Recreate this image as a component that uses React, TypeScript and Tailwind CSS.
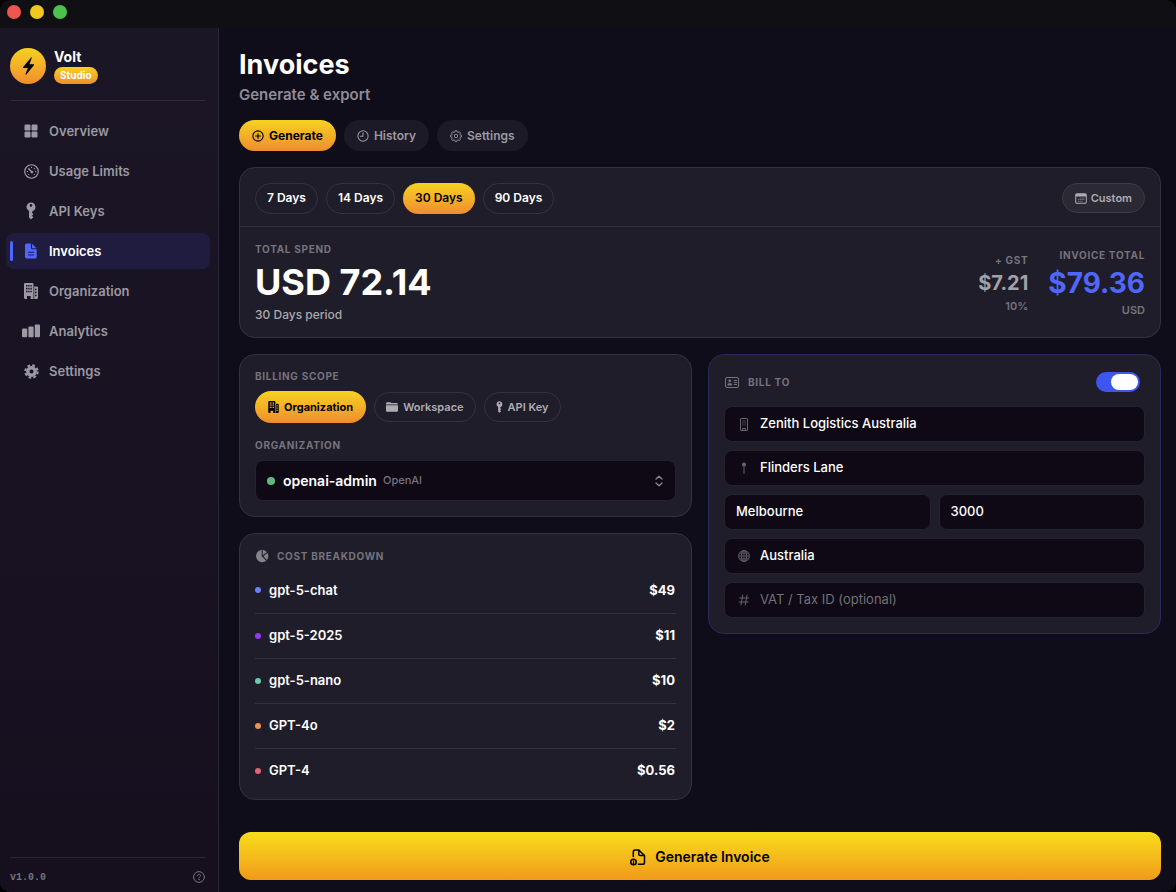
import React, { useState } from 'react'
import clsx from 'clsx'

type IconProps = {
    className?: string
}

const GridIcon = ({ className }: IconProps) => (
    <svg viewBox="0 0 14 14" className={className} fill="currentColor">
        <rect x="0.5" y="0.5" width="6" height="6" rx="1.2" />
        <rect x="7.5" y="0.5" width="6" height="6" rx="1.2" />
        <rect x="0.5" y="7.5" width="6" height="6" rx="1.2" />
        <rect x="7.5" y="7.5" width="6" height="6" rx="1.2" />
    </svg>
)

const GaugeIcon = ({ className }: IconProps) => (
    <svg viewBox="0 0 16 16" className={className} fill="none">
        <circle cx="8" cy="8" r="7.2" stroke="currentColor" strokeWidth="1.3" />
        <path
            d="M5 5 8.2 8.4"
            stroke="currentColor"
            strokeWidth="1.5"
            strokeLinecap="round"
        />
        <g fill="currentColor">
            <circle cx="8.4" cy="8.6" r="1.4" />
            <circle cx="8" cy="3.6" r="0.7" />
            <circle cx="11" cy="5" r="0.7" />
            <circle cx="12.4" cy="8" r="0.7" />
            <circle cx="3.6" cy="8" r="0.7" />
            <circle cx="5" cy="11" r="0.7" />
            <circle cx="11" cy="11" r="0.7" />
        </g>
    </svg>
)

const KeyIcon = ({ className }: IconProps) => (
    <svg viewBox="0 0 10 18" className={className} fill="currentColor">
        <path
            fillRule="evenodd"
            d="M5 .4a4.5 4.5 0 0 0-2 8.5v6.7l2 2 2.4-2.3-1.5-1.5 1.5-1.6-1.2-1.3V9.2A4.5 4.5 0 0 0 5 .4Zm0 1.7a1.3 1.3 0 1 1 0 2.6 1.3 1.3 0 0 1 0-2.6Z"
        />
    </svg>
)

const DocumentIcon = ({ className }: IconProps) => (
    <svg viewBox="0 0 12 16" className={className} fill="currentColor">
        <path
            fillRule="evenodd"
            d="M1.8.5h4.1v4.3c0 .9.5 1.4 1.4 1.4h4.4v7.6c0 1.1-.7 1.8-1.8 1.8H1.8C.7 15.6 0 14.9 0 13.8V2.3C0 1.2.7.5 1.8.5ZM3 8.8v1h6v-1H3Zm0 2.8v1h6v-1H3Z"
        />
        <path d="M7 .7 11.5 5.2H7.3A.3.3 0 0 1 7 4.900V.7Z" />
    </svg>
)

const BuildingIcon = ({ className }: IconProps) => (
    <svg viewBox="0 0 14 16" className={className} fill="currentColor">
        <path
            fillRule="evenodd"
            d="M1.2 0h7.1c.7 0 1.2.5 1.2 1.2V16H6.6v-3H3v3H1.2C.5 16 0 15.5 0 14.8V1.200C0 .5.5 0 1.2 0ZM2 2v1.500h1.500V2H2Zm2.200 0v1.500h1.400V2H4.200Zm2.200 0v1.500h1.400V2H6.400ZM2 4.800v1.600h1.500V4.800H2Zm2.200 0v1.600h1.400V4.800H4.200Zm2.200 0v1.600h1.400V4.800H6.400ZM2 7.700v1.600h1.500V7.700H2Zm2.200 0v1.600h1.400V7.700H4.200Zm2.200 0v1.600h1.400V7.700H6.400Z"
        />
        <path
            fillRule="evenodd"
            d="M10.200 3.500h2.600c.7 0 1.200.5 1.200 1.200v10.100c0 .7-.5 1.200-1.200 1.200h-2.600V3.500ZM11 5.800v1.400h1.600V5.800H11Zm0 3v1.400h1.600V8.800H11Zm0 3v1.400h1.600v-1.400H11Z"
        />
    </svg>
)

const BarsIcon = ({ className }: IconProps) => (
    <svg viewBox="0 0 18 14" className={className} fill="currentColor">
        <rect x="0" y="4.5" width="5.2" height="8.8" rx="1" />
        <rect x="6.4" y="2.5" width="5.2" height="10.8" rx="1" />
        <rect x="12.8" y="0.5" width="5.2" height="12.8" rx="1" />
    </svg>
)

const GearIcon = ({ className }: IconProps) => (
    <svg viewBox="0 0 16 16" className={className} fill="none" stroke="currentColor">
        <circle cx="8" cy="8" r="4" strokeWidth="3.6" />
        <circle cx="8" cy="8" r="6.6" strokeWidth="2.2" strokeDasharray="2.9 2.284" />
    </svg>
)

const GearOutlineIcon = ({ className }: IconProps) => (
    <svg
        viewBox="0 0 16 16"
        className={className}
        fill="none"
        stroke="currentColor"
        strokeWidth="1.2"
        strokeLinejoin="round"
    >
        <path d="M6.9.9h2.2l.5 1.8 1.1.5 1.7-.9 1.500 1.500-.9 1.700.5 1.100 1.800.5v2.100l-1.800.5-.5 1.100.9 1.700-1.500 1.500-1.700-.9-1.100.5-.5 1.700H6.900l-.5-1.700-1.100-.5-1.700.9-1.500-1.500.9-1.700-.5-1.100L.700 9.200V7.100l1.800-.5.500-1.100-.9-1.700 1.500-1.500 1.700.9 1.100-.5.500-1.800Z" />
        <circle cx="8" cy="8" r="2.300" />
    </svg>
)

const BoltIcon = ({ className }: IconProps) => (
    <svg viewBox="0 0 14 20" className={className} fill="currentColor">
        <path d="M9.700.7 1 11.200c-.4.5-.2 1 .4 1h4.800l-2.500 6.700c-.3.8.4 1.100.9.500L13 9.100c.4-.5.2-1-.4-1H8.100l2.500-6.900c.2-.8-.4-1.100-.9-.5Z" />
    </svg>
)

const PlusCircleIcon = ({ className }: IconProps) => (
    <svg
        viewBox="0 0 14 14"
        className={className}
        fill="none"
        stroke="currentColor"
        strokeWidth="1.3"
        strokeLinecap="round"
    >
        <circle cx="7" cy="7" r="6" />
        <path d="M7 4.200v5.600M4.200 7h5.600" />
    </svg>
)

const ClockIcon = ({ className }: IconProps) => (
    <svg
        viewBox="0 0 14 14"
        className={className}
        fill="none"
        stroke="currentColor"
        strokeWidth="1.2"
        strokeLinecap="round"
        strokeLinejoin="round"
    >
        <circle cx="7" cy="7" r="6" />
        <path d="M7 3.200v4H4" />
    </svg>
)

const CalendarIcon = ({ className }: IconProps) => (
    <svg viewBox="0 0 12 11" className={className} fill="currentColor">
        <path
            fillRule="evenodd"
            d="M2 .2h8c1.100 0 1.800.7 1.800 1.800v7c0 1.100-.7 1.800-1.800 1.800H2C.900 10.800.200 10.100.200 9V2C.200.900.900.200 2 .200ZM1.200 3.400V9c0 .5.300.8.800.8h8c.5 0 .8-.3.8-.8V3.400H1.200Z"
        />
        <path
            d="M4.700 4.400h1v1h-1zM6.500 4.400h1v1h-1zM8.300 4.400h1v1h-1zM2.900 6.100h1v1h-1zM4.700 6.100h1v1h-1zM6.500 6.100h1v1h-1zM8.300 6.100h1v1h-1zM2.900 7.800h1v1h-1zM4.700 7.800h1v1h-1zM6.500 7.800h1v1h-1z"
            opacity="0.7"
        />
    </svg>
)

const FolderIcon = ({ className }: IconProps) => (
    <svg viewBox="0 0 12 10" className={className} fill="currentColor">
        <path d="M0 2.600V1.700C0 .700.600.200 1.500.200h2.200c.5 0 .8.100 1.100.4l.5.4h5c1 0 1.600.5 1.600 1.500v.1H0Z" />
        <path d="M0 3.200h12v5.100c0 1-.6 1.500-1.600 1.500H1.500C.600 9.800 0 9.300 0 8.300V3.200Z" />
    </svg>
)

const PieIcon = ({ className }: IconProps) => (
    <svg viewBox="0 0 14 14" className={className} fill="currentColor">
        <path d="M6.700.8v6.400l4.600 4.500A6.200 6.200 0 1 1 6.700.8Z" />
        <path d="M7.700.8a6.200 6.200 0 0 1 4.100 2.400L7.700 6.200V.8Z" />
        <path d="M12.400 4.100a6.200 6.200 0 0 1-.4 6.900L8.300 7.200l4.100-3.100Z" />
    </svg>
)

const IdCardIcon = ({ className }: IconProps) => (
    <svg viewBox="0 0 14 11" className={className} fill="none" stroke="currentColor">
        <rect x="0.5" y="0.5" width="13" height="10" rx="1.5" />
        <circle cx="4.700" cy="3.900" r="1.300" fill="currentColor" stroke="none" />
        <path
            d="M2.300 8.400c0-1.700 1-2.500 2.400-2.500s2.400.8 2.400 2.500Z"
            fill="currentColor"
            stroke="none"
        />
        <path d="M8.800 3.500H12M8.800 5.500H12M8.800 7.500H12" />
    </svg>
)

const TowerIcon = ({ className }: IconProps) => (
    <svg viewBox="0 0 8 13" className={className} fill="none" stroke="currentColor">
        <rect x="0.5" y="0.5" width="7" height="12" rx="0.6" />
        <path d="M2.900 2.500v6M5.100 2.500v6" strokeDasharray="1 1" strokeWidth="1.200" />
        <path d="M2.500 12.500v-2h3v2" />
    </svg>
)

const PinIcon = ({ className }: IconProps) => (
    <svg viewBox="0 0 6 12" className={className}>
        <circle cx="3" cy="2.400" r="2" fill="currentColor" />
        <path d="M3 4v7.500" stroke="currentColor" strokeLinecap="round" />
    </svg>
)

const GlobeIcon = ({ className }: IconProps) => (
    <svg viewBox="0 0 12 12" className={className} fill="none" stroke="currentColor">
        <circle cx="6" cy="6" r="5.400" />
        <ellipse cx="6" cy="6" rx="2.600" ry="5.400" />
        <path d="M6 .6v10.800M.6 6h10.800M1.500 3.200h9M1.500 8.800h9" strokeWidth="0.800" />
    </svg>
)

const HashIcon = ({ className }: IconProps) => (
    <svg
        viewBox="0 0 12 12"
        className={className}
        fill="none"
        stroke="currentColor"
        strokeLinecap="round"
    >
        <path d="M4.700 1 3 11M9 1 7.300 11M1.700 4h9M1.200 8h9" />
    </svg>
)

const UpDownIcon = ({ className }: IconProps) => (
    <svg
        viewBox="0 0 8 12"
        className={className}
        fill="none"
        stroke="currentColor"
        strokeWidth="1.300"
        strokeLinecap="round"
        strokeLinejoin="round"
    >
        <path d="M1 4 4 1.200 7 4M1 8l3 2.800L7 8" />
    </svg>
)

const HelpIcon = ({ className }: IconProps) => (
    <svg
        viewBox="0 0 12 12"
        className={className}
        fill="none"
        stroke="currentColor"
        strokeLinecap="round"
    >
        <circle cx="6" cy="6" r="5.400" />
        <path d="M4.500 4.700C4.600 3.700 5.200 3.300 6 3.300s1.500.5 1.500 1.300c0 1.200-1.500 1.100-1.500 2.300" />
        <circle cx="6" cy="8.600" r="0.300" fill="currentColor" strokeWidth="0.600" />
    </svg>
)

const ExportIcon = ({ className }: IconProps) => (
    <svg
        viewBox="0 0 16 17"
        className={className}
        fill="none"
        stroke="currentColor"
        strokeWidth="1.500"
        strokeLinejoin="round"
        strokeLinecap="round"
    >
        <path d="M3.300 7.500V2.800c0-1.200.6-1.800 1.800-1.800h3.700l5.700 5.600v6.900c0 1.200-.6 1.800-1.800 1.800H8.300" />
        <path d="M8.800 1.200v4c0 .9.400 1.300 1.300 1.300h4" />
        <circle cx="3.500" cy="13" r="2.700" strokeWidth="1.600" />
        <path d="M3.500 14.500v-2.700" strokeWidth="1.200" />
    </svg>
)

const navItems = [
    { label: 'Overview', icon: <GridIcon className="size-[14px]" /> },
    { label: 'Usage Limits', icon: <GaugeIcon className="size-[15px]" /> },
    { label: 'API Keys', icon: <KeyIcon className="w-[10px] h-[18px]" /> },
    { label: 'Invoices', icon: <DocumentIcon className="w-3 h-4" /> },
    { label: 'Organization', icon: <BuildingIcon className="w-[14px] h-4" /> },
    { label: 'Analytics', icon: <BarsIcon className="w-[18px] h-[14px]" /> },
    { label: 'Settings', icon: <GearIcon className="size-[15px]" /> },
]

const tabs = [
    { label: 'Generate', icon: <PlusCircleIcon className="size-3" /> },
    { label: 'History', icon: <ClockIcon className="size-3" /> },
    { label: 'Settings', icon: <GearOutlineIcon className="size-3" /> },
]

const periods = ['7 Days', '14 Days', '30 Days', '90 Days']

const scopes = [
    { label: 'Organization', icon: <BuildingIcon className="w-[11px] h-3" /> },
    { label: 'Workspace', icon: <FolderIcon className="w-3 h-[10px]" /> },
    { label: 'API Key', icon: <KeyIcon className="w-[7px] h-3" /> },
]

const costs = [
    { model: 'gpt-5-chat', amount: '$49', dot: 'bg-[#6b7fff]' },
    { model: 'gpt-5-2025', amount: '$11', dot: 'bg-[#9a35f0]' },
    { model: 'gpt-5-nano', amount: '$10', dot: 'bg-[#62cdb0]' },
    { model: 'GPT-4o', amount: '$2', dot: 'bg-[#f0924c]' },
    { model: 'GPT-4', amount: '$0.56', dot: 'bg-[#e0647c]' },
]

const gold = 'bg-linear-to-b from-[#f5d21f] to-[#f08c2d]'

type SectionLabelProps = {
    children: React.ReactNode
    className?: string
}

const SectionLabel = ({ children, className }: SectionLabelProps) => (
    <div
        className={clsx(
            'text-[10px] leading-4 font-bold tracking-[0.07em] uppercase text-[#75737c]',
            className
        )}
    >
        {children}
    </div>
)

type CardProps = {
    children: React.ReactNode
    className?: string
}

const Card = ({ children, className }: CardProps) => (
    <section className={clsx('rounded-2xl border bg-[#1f1d29]', className)}>
        {children}
    </section>
)

type FieldProps = {
    label: string
    value?: string
    placeholder?: string
    icon?: React.ReactNode
}

const Field = ({ label, value, placeholder, icon }: FieldProps) => (
    <label className="flex h-9 w-full min-w-0 items-center gap-2 rounded-lg border border-[#24222e] bg-[#0e0915] px-[11px]">
        {icon && (
            <span className="flex w-4 shrink-0 justify-center text-[#65636c]">
                {icon}
            </span>
        )}
        <input
            aria-label={label}
            defaultValue={value}
            placeholder={placeholder}
            className="w-full min-w-0 bg-transparent text-[13px] font-medium text-white outline-none placeholder:font-normal placeholder:text-[#727078]"
        />
    </label>
)

const Sidebar = () => (
    <aside className="flex w-[219px] shrink-0 flex-col border-r border-[#2a2735] bg-linear-to-b from-[#1b1626] to-[#150f1e]">
        <div className="ml-[10px] mr-3 flex items-center gap-2 border-b border-[#2d2937] pt-5 pb-4">
            <div
                className={clsx(
                    'flex size-9 items-center justify-center rounded-full text-black',
                    gold
                )}
            >
                <BoltIcon className="h-[18px] w-[13px]" />
            </div>
            <div className="flex flex-col items-start gap-0.5">
                <span className="text-sm leading-[17px] font-bold text-white">Volt</span>
                <span
                    className={clsx(
                        'rounded-full px-1.5 text-[10px] leading-[17px] font-bold text-white',
                        gold
                    )}
                >
                    Studio
                </span>
            </div>
        </div>

        <nav className="ml-1.5 mr-2 mt-3 flex flex-col gap-1">
            {navItems.map((item) => {
                const active = item.label === 'Invoices'
                return (
                    <a
                        key={item.label}
                        href="#"
                        className={clsx(
                            'flex h-9 items-center rounded-lg pl-1 text-[13px] font-semibold',
                            active ? 'bg-[#201c3f] text-white' : 'text-[#9b99a1]'
                        )}
                    >
                        <span
                            className={clsx(
                                'h-5 w-[3px] rounded-full',
                                active && 'bg-[#5166fb]'
                            )}
                        />
                        <span
                            className={clsx(
                                'mx-2 flex w-5 justify-center',
                                active && 'text-[#5166fb]'
                            )}
                        >
                            {item.icon}
                        </span>
                        <span className="pt-0.5">{item.label}</span>
                    </a>
                )
            })}
        </nav>

        <div className="mt-auto ml-[10px] mr-3 flex h-[35px] items-center justify-between border-t border-[#2a2634] pt-1 text-[#75737c]">
            <span className="font-['Liberation_Mono',monospace] text-[10px] font-bold">
                v1.0.0
            </span>
            <button aria-label="Help" className="mr-px">
                <HelpIcon className="size-3" />
            </button>
        </div>
    </aside>
)

const SpendCard = () => {
    const [period, setPeriod] = useState('30 Days')

    return (
        <Card className="mt-4 border-[#34323d]">
            <div className="flex h-[59px] items-center justify-between border-b border-[#34323d] px-[15px] pt-0.5">
                <div className="flex gap-2">
                    {periods.map((item) => (
                        <button
                            key={item}
                            onClick={() => setPeriod(item)}
                            className={clsx(
                                'h-[31px] rounded-full text-xs font-semibold',
                                item === period
                                    ? ['px-3 text-black', gold]
                                    : 'border border-[#34323d] px-[11px] text-white'
                            )}
                        >
                            {item}
                        </button>
                    ))}
                </div>
                <button className="flex h-[30px] items-center gap-1 rounded-full border border-[#3c3a45] bg-[#2b2934] px-3 text-[11px] font-semibold text-[#aeacb3]">
                    <CalendarIcon className="h-[11px] w-3" />
                    Custom
                </button>
            </div>

            <div className="flex items-start justify-between px-[15px] pt-[14px] pb-[15px]">
                <div>
                    <SectionLabel>Total Spend</SectionLabel>
                    <div className="text-4xl leading-[50px] font-bold text-white">
                        USD 72.14
                    </div>
                    <div className="text-xs leading-[15px] font-medium text-[#aaa8af]">
                        30 Days period
                    </div>
                </div>
                <div className="flex items-center gap-5 pt-1.5 text-right">
                    <div>
                        <SectionLabel>+ GST</SectionLabel>
                        <div className="text-xl leading-[30px] font-bold text-[#a3a1a8]">
                            $7.21
                        </div>
                        <div className="text-[11px] leading-4 font-semibold text-[#75737c]">
                            10%
                        </div>
                    </div>
                    <div>
                        <SectionLabel>Invoice Total</SectionLabel>
                        <div className="pt-0.5 text-[28px] leading-[37px] font-bold text-[#5166fb]">
                            $79.36
                        </div>
                        <div className="text-[11px] leading-4 font-semibold text-[#75737c]">
                            USD
                        </div>
                    </div>
                </div>
            </div>
        </Card>
    )
}

const ScopeCard = () => {
    const [scope, setScope] = useState('Organization')

    return (
        <Card className="border-[#34323d] px-[15px] pt-[13px] pb-[15px]">
            <SectionLabel>Billing Scope</SectionLabel>
            <div className="mt-[7px] flex items-center gap-2">
                {scopes.map((item) => (
                    <button
                        key={item.label}
                        onClick={() => setScope(item.label)}
                        className={clsx(
                            'flex items-center gap-[5px] rounded-full text-[11px]',
                            item.label === scope
                                ? ['h-8 px-[13px] font-bold text-black', gold]
                                : 'h-[30px] border border-[#34323d] px-[11px] font-semibold text-[#aeacb3]'
                        )}
                    >
                        {item.icon}
                        {item.label}
                    </button>
                ))}
            </div>
            <SectionLabel className="mt-[14px]">
                <label htmlFor="organization">Organization</label>
            </SectionLabel>
            <div className="mt-[7px] flex h-[41px] items-center rounded-lg border border-[#24222e] bg-[#0e0915] px-[11px]">
                <span className="mr-2 size-2 rounded-full bg-[#62b67f]" />
                <select
                    id="organization"
                    className="appearance-none bg-transparent text-sm font-semibold text-white outline-none"
                >
                    <option>openai-admin</option>
                </select>
                <span className="ml-1.5 text-[11px] font-medium text-[#75737c]">OpenAI</span>
                <UpDownIcon className="ml-auto mr-px h-3 w-2 text-[#8b8992]" />
            </div>
        </Card>
    )
}

const BreakdownCard = () => (
    <Card className="border-[#34323d] px-[15px] pt-[14px] pb-[6px]">
        <div className="flex items-center gap-2">
            <PieIcon className="size-[14px] text-[#85838c]" />
            <SectionLabel>Cost Breakdown</SectionLabel>
        </div>
        <table className="mt-1 w-full text-[13px] font-semibold text-white">
            <tbody>
                {costs.map((item) => (
                    <tr
                        key={item.model}
                        className="h-[45px] border-b border-[#34323d] last:border-b-0"
                    >
                        <td>
                            <span className="flex items-center gap-2">
                                <span className={clsx('size-1.5 rounded-full', item.dot)} />
                                {item.model}
                            </span>
                        </td>
                        <td className="pr-px text-right font-bold">{item.amount}</td>
                    </tr>
                ))}
            </tbody>
        </table>
    </Card>
)

const BillToCard = () => (
    <Card className="border-[#292a5c] p-[15px]">
        <div className="flex h-6 items-center gap-2">
            <span className="flex w-4 justify-center">
                <IdCardIcon className="h-[11px] w-[14px] text-[#75737c]" />
            </span>
            <SectionLabel>
                <label htmlFor="bill-to">Bill To</label>
            </SectionLabel>
            <label className="ml-auto mr-[5px] flex cursor-pointer">
                <input id="bill-to" type="checkbox" defaultChecked className="peer sr-only" />
                <span className="flex h-5 w-11 items-center rounded-full bg-[#34323d] p-0.5 peer-checked:justify-end peer-checked:bg-[#3e56f0]">
                    <span className="h-4 w-[27px] rounded-full bg-white" />
                </span>
            </label>
        </div>
        <div className="mt-3 flex flex-col gap-2">
            <Field
                label="Company"
                value="Zenith Logistics Australia"
                icon={<TowerIcon className="h-[13px] w-2" />}
            />
            <Field
                label="Street"
                value="Flinders Lane"
                icon={<PinIcon className="h-3 w-1.5" />}
            />
            <div className="flex gap-2">
                <Field label="City" value="Melbourne" />
                <Field label="Postcode" value="3000" />
            </div>
            <Field
                label="Country"
                value="Australia"
                icon={<GlobeIcon className="size-3" />}
            />
            <Field
                label="VAT / Tax ID"
                placeholder="VAT / Tax ID (optional)"
                icon={<HashIcon className="size-3" />}
            />
        </div>
    </Card>
)

const App = () => {
    const [tab, setTab] = useState('Generate')

    return (
        <div className="min-h-screen bg-black font-[Inter,sans-serif]">
            <div className="flex min-h-screen flex-col overflow-hidden rounded-[10px] bg-[#0f0d1a]">
                <header className="flex h-7 items-center gap-[9px] bg-[#101014] px-[7px] pb-1">
                    <span className="size-[14px] rounded-full bg-[#f0544f]" />
                    <span className="size-[14px] rounded-full bg-[#f0c81e]" />
                    <span className="size-[14px] rounded-full bg-[#4bc24b]" />
                </header>

                <div className="flex flex-1">
                    <Sidebar />

                    <main className="flex min-w-0 flex-1 flex-col pt-5 pr-[15px] pb-3 pl-5">
                        <h1 className="text-[27px] leading-[34px] font-bold text-white">
                            Invoices
                        </h1>
                        <p className="mt-1 text-[15px] leading-[18px] font-semibold text-[#8f8d96]">
                            Generate & export
                        </p>

                        <div className="mt-4 flex gap-2">
                            {tabs.map((item) => (
                                <button
                                    key={item.label}
                                    onClick={() => setTab(item.label)}
                                    className={clsx(
                                        'flex h-[31px] items-center gap-[5px] rounded-full px-[13px] text-xs',
                                        item.label === tab
                                            ? ['font-bold text-black', gold]
                                            : 'bg-[#1c1a26] font-semibold text-[#9b99a1]'
                                    )}
                                >
                                    {item.icon}
                                    {item.label}
                                </button>
                            ))}
                        </div>

                        <SpendCard />

                        <div className="mt-4 mb-8 grid grid-cols-2 items-start gap-4">
                            <div className="flex flex-col gap-4">
                                <ScopeCard />
                                <BreakdownCard />
                            </div>
                            <BillToCard />
                        </div>

                        <button className="mt-auto flex h-12 w-full items-center justify-center gap-[9px] rounded-xl bg-linear-to-b from-[#f7de1c] to-[#f09a1a] pt-0.5 text-sm font-semibold text-black">
                            <ExportIcon className="h-[17px] w-4" />
                            Generate Invoice
                        </button>
                    </main>
                </div>
            </div>
        </div>
    )
}

export default App
